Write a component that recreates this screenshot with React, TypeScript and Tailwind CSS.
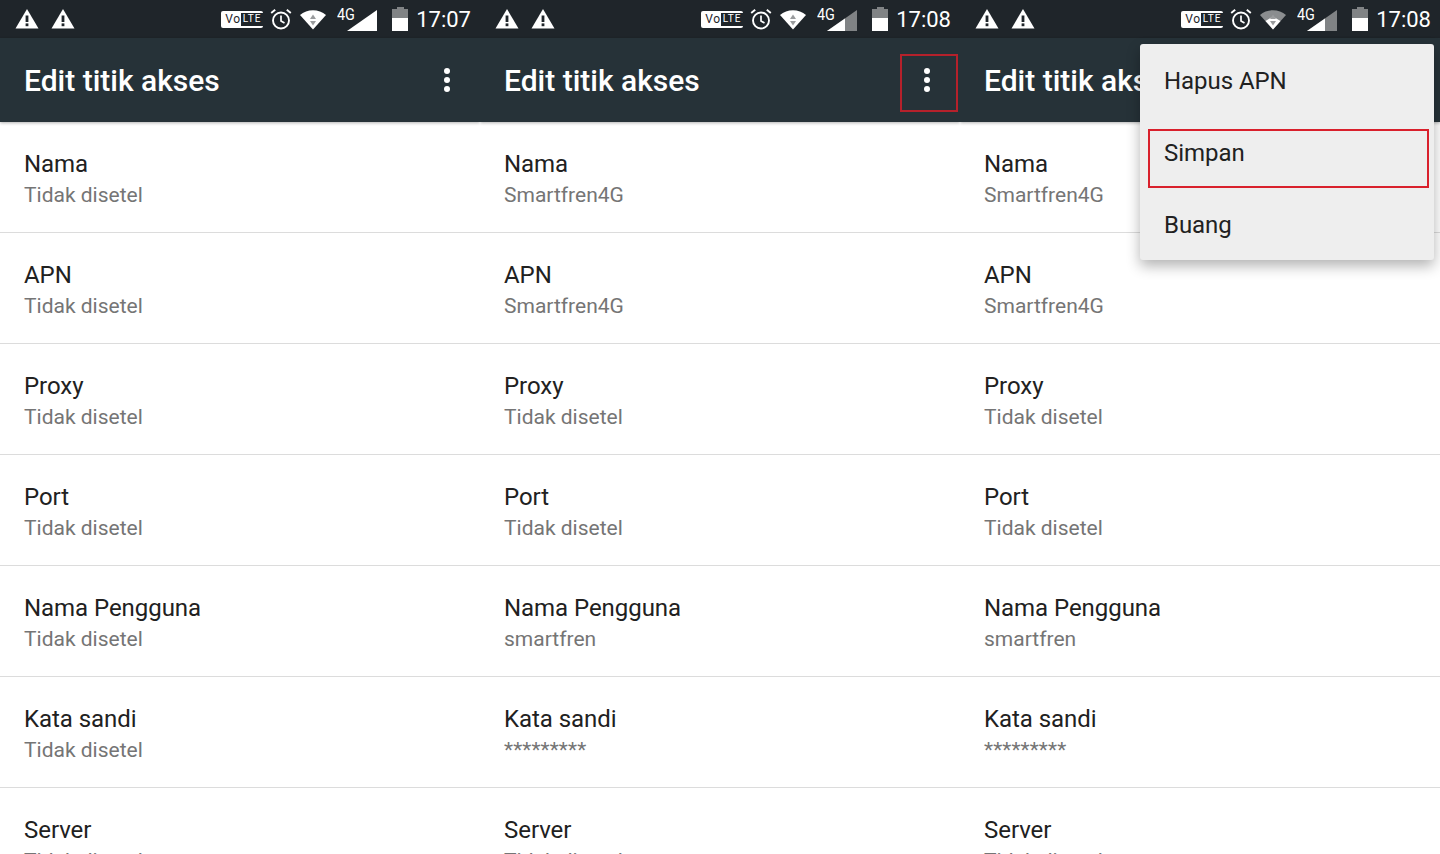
import React from "react";

interface PanelProps {
  time: string;
  values: string[];
  signalFull?: boolean;
  wifiDim?: boolean;
}

const labels = ["Nama", "APN", "Proxy", "Port", "Nama Pengguna", "Kata sandi", "Server"];

const WarningIcon: React.FC = () => (
  <svg width="24" height="22" viewBox="0 0 24 22" className="block">
    <path d="M12 1 L23.5 20.5 H0.5 Z" fill="#fff" />
    <rect x="10.6" y="7.5" width="2.8" height="6.5" fill="#1f252a" />
    <rect x="10.6" y="15.4" width="2.8" height="2.8" fill="#1f252a" />
  </svg>
);

const VolteIcon: React.FC = () => (
  <div className="flex items-center w-[42px] h-[17px] bg-white rounded-[2px] pl-[4px] font-['Roboto',sans-serif] text-[12px] leading-none text-[#1f252a] tracking-[0.8px]">
    <span>Vo</span>
    <span className="flex items-center justify-center w-[22px] h-[13px] bg-[#1f252a] text-white text-[10px] tracking-[1px]">LTE</span>
  </div>
);

const AlarmIcon: React.FC = () => (
  <svg width="22" height="22" viewBox="0 0 22 22" fill="none" stroke="#fff" className="block">
    <circle cx="11" cy="12.5" r="8" strokeWidth="1.9" />
    <path d="M11 7.5 V13 L14.5 15" strokeWidth="1.7" />
    <path d="M1.2 5 L5.2 1.7 M20.8 5 L16.8 1.7" strokeWidth="1.9" />
  </svg>
);

const WifiIcon: React.FC<{ dim?: boolean }> = ({ dim }) => (
  <svg width="28" height="22" viewBox="0 0 28 22" className="block">
    <path d="M1 7 C8 0.5 20 0.5 27 7 L14 21.5 Z" fill={dim ? "#8a8d8f" : "#fff"} />
    {dim && <path d="M6.5 13 L14 21.5 L21.5 13 L14 8.5 Z" fill="#fff" />}
    <path d="M14 6.5 L17 11 H11 Z" fill="#9a9c9e" />
    <path d="M14 17.5 L17 13 H11 Z" fill="#9a9c9e" />
  </svg>
);

const SignalIcon: React.FC<{ full?: boolean }> = ({ full }) => (
  <div className="relative w-[40px] h-[24px]">
    <svg width="30" height="21" viewBox="0 0 30 21" className="absolute left-[10px] top-[3px]">
      <path d="M30 0 V21 H0 Z" fill={full ? "#fff" : "#808385"} />
      {!full && <path d="M18 8.4 V21 H0 Z" fill="#fff" />}
    </svg>
    <span className="absolute left-0 top-[-1px] font-['Roboto',sans-serif] text-[16px] leading-[18px] text-white scale-x-90 origin-left">4G</span>
  </div>
);

const BatteryIcon: React.FC = () => (
  <div className="flex flex-col items-center w-[16px] h-[24px]">
    <div className="w-[7px] h-[2px] bg-[#808385]" />
    <div className="w-[16px] h-[9px] bg-[#808385]" />
    <div className="w-[16px] h-[13px] bg-white" />
  </div>
);

const Dots: React.FC = () => (
  <div className="flex flex-col gap-[3px]">
    <span className="w-[6px] h-[6px] rounded-full bg-white" />
    <span className="w-[6px] h-[6px] rounded-full bg-white" />
    <span className="w-[6px] h-[6px] rounded-full bg-white" />
  </div>
);

const Panel: React.FC<PanelProps> = ({ time, values, signalFull, wifiDim }) => (
  <div className="w-[480px] h-[854px] shrink-0 overflow-hidden flex flex-col bg-white">
    <div className="h-[38px] shrink-0 bg-[#1f252a] flex items-center pl-[15px] pr-[9px]">
      <div className="flex items-center gap-[12px]">
        <WarningIcon />
        <WarningIcon />
      </div>
      <div className="ml-auto flex items-center">
        <VolteIcon />
        <div className="ml-[7px]"><AlarmIcon /></div>
        <div className="ml-[7px]"><WifiIcon dim={wifiDim} /></div>
        <div className="ml-[10px]"><SignalIcon full={signalFull} /></div>
        <div className="ml-[15px]"><BatteryIcon /></div>
        <span className="ml-[8px] pt-[1px] font-['Roboto',sans-serif] text-[22px] leading-none text-white">{time}</span>
      </div>
    </div>
    <div className="h-[84px] shrink-0 bg-[#263238] flex items-center justify-between pl-[24px] pr-[30px] shadow-[0_1px_3px_rgba(0,0,0,0.3)] z-10">
      <span className="font-['Roboto',sans-serif] text-[30px] font-medium leading-none text-white pt-[2px]">Edit titik akses</span>
      <Dots />
    </div>
    <div className="flex flex-col">
      {labels.map((label, i) => (
        <div key={label} className="h-[111px] shrink-0 pl-[24px] pt-[28px] border-b border-[#dcdcdc] font-['Roboto',sans-serif]">
          <div className="text-[24px] leading-[28px] text-[#212121] tracking-[-0.05px]">{label}</div>
          <div className={`text-[21px] leading-[25px] mt-[5px] text-[#757575] ${values[i] === "*********" ? "tracking-[0.1px]" : ""}`}>
            {values[i]}
          </div>
        </div>
      ))}
    </div>
  </div>
);

const unset = Array(7).fill("Tidak disetel") as string[];
const filled = [
  "Smartfren4G",
  "Smartfren4G",
  "Tidak disetel",
  "Tidak disetel",
  "smartfren",
  "*********",
  "Tidak disetel",
];

const App: React.FC = () => (
  <div className="relative w-[1440px] h-[854px] overflow-hidden flex">
    <Panel time="17:07" values={unset} signalFull />
    <Panel time="17:08" values={filled} />
    <Panel time="17:08" values={filled} wifiDim />

    {/* red annotation round the overflow button */}
    <div className="absolute z-20 left-[900px] top-[54px] w-[58px] h-[58px] border-2 border-[#b5212b]" />

    {/* overflow menu of the third panel */}
    <div className="absolute z-20 left-[1140px] top-[44px] w-[294px] h-[216px] bg-[#eeeeee] rounded-[3px] shadow-[0_6px_14px_rgba(0,0,0,0.3)] flex flex-col font-['Roboto',sans-serif] text-[24px] text-[#212121] tracking-[-0.05px]">
      <div className="h-[72px] flex items-center pl-[24px] pt-[2px]">Hapus APN</div>
      <div className="h-[72px] flex items-center pl-[24px] pt-[2px]">Simpan</div>
      <div className="h-[72px] flex items-center pl-[24px] pt-[2px]">Buang</div>
      <div className="absolute left-[8px] top-[85px] w-[281px] h-[59px] border-2 border-[#d9202c]" />
    </div>
  </div>
);

export default App;
